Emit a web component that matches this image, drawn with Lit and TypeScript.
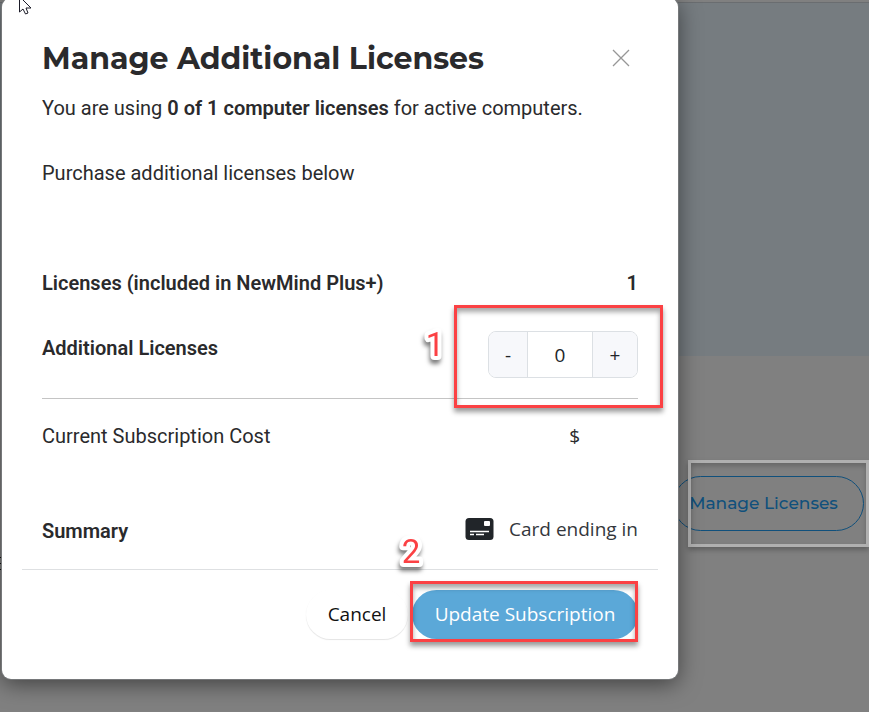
import { LitElement, html, css, svg } from "lit";
import { customElement, state, property } from "lit/decorators.js";

@customElement("step-mark")
class StepMark extends LitElement {
  @property() label = "1";

  static styles = css`
    :host {
      display: block;
      width: 40px;
      height: 44px;
      pointer-events: none;
    }
    svg {
      display: block;
      overflow: visible;
      filter: drop-shadow(-1px 4px 2px rgba(0, 0, 0, 0.5));
    }
    text {
      font: 400 33px Roboto, sans-serif;
      fill: #fb4144;
      stroke: #fff;
      stroke-width: 8px;
      stroke-linejoin: round;
      paint-order: stroke;
      text-anchor: middle;
    }
  `;

  render() {
    return html`<svg width="40" height="44" viewBox="0 0 40 44">
      ${svg`<text x="20" y="33" aria-hidden="true">${this.label}</text>`}
    </svg>`;
  }
}

@customElement("app-root")
class AppRoot extends LitElement {
  @state() private count = 0;

  static styles = css`
    * {
      box-sizing: border-box;
    }
    :host {
      display: block;
      position: relative;
      min-height: 100vh;
      overflow: hidden;
      background: #808080;
      color: #2a2a2c;
      font: 20px/24px Roboto, sans-serif;
    }
    .hero {
      height: 354px;
      margin-top: 2px;
      border-top: 1px solid #6a6d70;
      background: #767c80;
    }
    .actions {
      display: flex;
      justify-content: flex-end;
      padding: 120px 5px 0 0;
    }
    .marked {
      position: relative;
    }
    .manage {
      width: 191px;
      height: 55px;
      padding: 0 10px 2px 0;
      border: 1px solid #10507c;
      border-radius: 28px;
      background: none;
      color: #10507c;
      font: 500 17px/24px Montserrat, Inter, sans-serif;
    }
    .frame {
      position: absolute;
      border: 3px solid #fb4144;
      box-shadow: 0 4px 5px rgba(0, 0, 0, 0.4), inset 0 4px 5px rgba(0, 0, 0, 0.35);
      pointer-events: none;
    }
    .frame.muted {
      inset: -16px -5px -16px 15px;
      border-color: #b0b0b0;
      box-shadow: 0 3px 5px rgba(0, 0, 0, 0.25), inset 0 3px 5px rgba(0, 0, 0, 0.2);
    }
    .frame.stepper-frame {
      inset: -26px -25px -30px -34px;
    }
    .frame.update-frame {
      inset: -9px 0 -3px -2px;
    }
    .fragment {
      position: absolute;
      left: 0;
      top: 557px;
      width: 1px;
      height: 13px;
      background: repeating-linear-gradient(#111 0 1px, #808080 1px 6px);
    }
    .backdrop {
      position: absolute;
      inset: 0;
      padding: 0 191px 0 2px;
    }
    .dialog {
      margin-top: -2px;
      padding: 35px 20px 40px;
      border-radius: 9px;
      background: #fff;
      box-shadow: 0 0 0 1px #76787a, 0 5px 22px rgba(0, 0, 0, 0.5);
    }
    .body {
      padding: 0 20px;
    }
    header {
      display: flex;
      align-items: center;
      justify-content: space-between;
      height: 50px;
      margin-bottom: 13px;
    }
    h2 {
      margin: 0;
      padding-top: 2px;
      font: 700 30px/40px Montserrat, Inter, sans-serif;
      white-space: nowrap;
    }
    .close {
      display: grid;
      padding: 8px;
      border: 0;
      background: none;
    }
    p {
      margin: 0 0 41px;
      white-space: nowrap;
    }
    b,
    .strong {
      font-weight: 600;
    }
    .row {
      display: flex;
      justify-content: space-between;
    }
    .included {
      margin-top: 86px;
    }
    .additional {
      margin-top: 36px;
      padding-bottom: 20px;
      border-bottom: 1px solid #c4c4c4;
    }
    .additional label {
      padding-top: 5px;
    }
    .stepper {
      display: grid;
      grid-template-columns: 38px 1fr 44px;
      width: 150px;
      height: 47px;
      border: 1px solid #dce0e4;
      border-radius: 8px;
      overflow: hidden;
    }
    .stepper button,
    .stepper input {
      width: 100%;
      min-width: 0;
      margin: 0;
      padding: 0;
      border: 0;
      background: #f7f8fb;
      color: #212529;
      font: 19px/24px "Open Sans", sans-serif;
      text-align: center;
    }
    .stepper input {
      border: solid #dce0e4;
      border-width: 0 1px;
      background: #fff;
    }
    .cost {
      margin-top: 25px;
    }
    .amount {
      padding-right: 58px;
      font: 19px/24px "Open Sans", sans-serif;
    }
    .summary {
      align-items: center;
      margin: 71px 0 26px;
    }
    .card {
      display: flex;
      align-items: center;
      gap: 15px;
      padding-bottom: 2px;
      margin-top: -2px;
      color: #34373c;
      font: 19px/24px "Open Sans", sans-serif;
    }
    footer {
      display: flex;
      justify-content: flex-end;
      gap: 4px;
      padding: 20px 20px 0;
      border-top: 1px solid #dee0e2;
    }
    .pill {
      height: 49px;
      padding: 0 0 2px;
      border: 0;
      border-radius: 25px;
      font: 19px/24px "Open Sans", sans-serif;
    }
    .cancel {
      width: 102px;
      background: #fff;
      color: #111;
      box-shadow: 0 1px 1px #e4e4e4;
    }
    .update {
      width: 226px;
      background: #5ba8d8;
      color: #fff;
    }
    .mark-one,
    .mark-two {
      position: absolute;
    }
    .mark-one {
      right: 183px;
      top: -8px;
    }
    .mark-two {
      right: 207px;
      top: -60px;
    }
    .pointer {
      position: absolute;
      left: 19px;
      top: 0;
    }
  `;

  render() {
    return html`
      <div class="hero"></div>
      <div class="actions">
        <div class="marked">
          <button class="manage">Manage Licenses</button>
          <div class="frame muted"></div>
        </div>
      </div>
      <div class="fragment"></div>
      <div class="backdrop">
        <section class="dialog" role="dialog" aria-labelledby="title">
          <div class="body">
            <header>
              <h2 id="title">Manage Additional Licenses</h2>
              <button class="close" aria-label="Close">
                <svg width="18" height="18" viewBox="0 0 18 18" fill="none" stroke="#979797" stroke-width="1.3">
                  <path d="M1 1 17 17M17 1 1 17" />
                </svg>
              </button>
            </header>
            <p>You are using <b>0 of 1 computer licenses</b> for active computers.</p>
            <p>Purchase additional licenses below</p>
            <div class="row included strong">
              <span>Licenses (included in NewMind Plus+)</span><span>1</span>
            </div>
            <div class="row additional">
              <label class="strong" for="count">Additional Licenses</label>
              <div class="marked">
                <div class="stepper">
                  <button aria-label="Decrease" @click=${() => (this.count = Math.max(0, this.count - 1))}>-</button>
                  <input id="count" type="text" inputmode="numeric" .value=${String(this.count)} />
                  <button aria-label="Increase" @click=${() => this.count++}>+</button>
                </div>
                <div class="frame stepper-frame"></div>
                <step-mark class="mark-one" label="1"></step-mark>
              </div>
            </div>
            <div class="row cost">
              <span>Current Subscription Cost</span><span class="amount">$</span>
            </div>
            <div class="row summary">
              <span class="strong">Summary</span>
              <span class="card">
                <svg width="29" height="24" viewBox="0 0 29 24">
                  <rect x="0.5" y="1" width="28" height="22" rx="3.5" fill="#212529" />
                  <rect x="19" y="4" width="6" height="5" rx="1" fill="#fff" />
                  <path d="M5 14.5H24M5 17.5H9M11 17.5H19" stroke="#fff" stroke-width="1.5" />
                </svg>
                Card ending in
              </span>
            </div>
          </div>
          <footer>
            <button class="pill cancel">Cancel</button>
            <div class="marked">
              <button class="pill update">Update Subscription</button>
              <div class="frame update-frame"></div>
              <step-mark class="mark-two" label="2"></step-mark>
            </div>
          </footer>
        </section>
      </div>
      <svg class="pointer" width="13" height="15" viewBox="0 0 13 15">
        <path d="M.5-3V12L4 9 6.5 14 9 13 7 8H12L1-3" fill="#fff" stroke="#1b1b28" />
      </svg>
    `;
  }
}
